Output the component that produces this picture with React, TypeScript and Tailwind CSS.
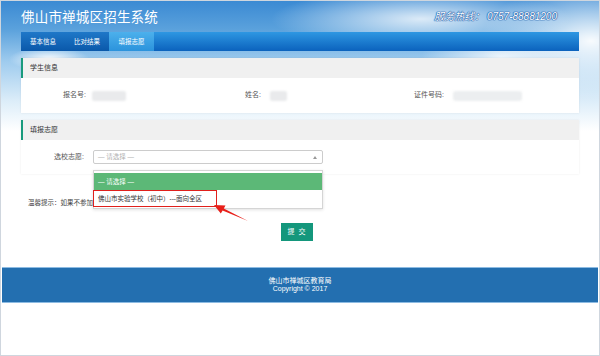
import { ChevronUp } from 'lucide-react'

const sky =
  'bg-[radial-gradient(ellipse_40px_12px_at_48px_58px,rgba(255,255,255,0.95),transparent),radial-gradient(ellipse_150px_30px_at_420px_18px,rgba(255,255,255,0.8),transparent),radial-gradient(ellipse_110px_60px_at_590px_40px,rgba(255,255,255,0.95),transparent),radial-gradient(ellipse_80px_25px_at_500px_56px,rgba(255,255,255,0.8),transparent),linear-gradient(to_bottom,#3b8ad3_0px,#5aa1dc_28px,#9ecbee_60px,#dcedf9_100px,#ffffff_130px)]'

function Card({ title, children }: { title: string; children: React.ReactNode }) {
  return (
    <div className="mx-[20px] bg-white shadow-[0_0_2px_rgba(0,0,0,0.08)]">
      <div className="h-[20px] flex items-center bg-[#f0f0f0] border-l-2 border-[#199a7c] pl-[7px] text-[7px] text-[#333]">
        {title}
      </div>
      {children}
    </div>
  )
}

export default function App() {
  return (
    <div
      className={`w-[600px] h-[356px] relative overflow-hidden border border-[#cfd6de] ${sky}`}
      style={{ fontFamily: '"Liberation Sans", "Noto Sans CJK SC", sans-serif' }}
    >
      {/* Header */}
      <div className="h-[31px] flex items-center justify-between px-[20px]">
        <span className="text-[13.5px] text-white tracking-[0.2px] [font-family:'Noto_Sans_CJK_SC',sans-serif]">
          佛山市禅城区招生系统
        </span>
        <span className="mr-[22px] text-[10px] italic text-white [text-shadow:0_0_1px_#1d5aa8,0_0_1px_#1d5aa8,0_0_1px_#1d5aa8,0_0_1px_#1d5aa8]">
          服务热线： 0757-88881200
        </span>
      </div>

      {/* Nav */}
      <div className="mx-[20px] h-[19px] flex bg-[linear-gradient(to_bottom,#2e97e2,#0b62bd)] text-[6.5px] text-white">
        <div className="w-[44px] flex items-center justify-center bg-[linear-gradient(to_bottom,#1f78c8,#0a58aa)]">基本信息</div>
        <div className="w-[44px] flex items-center justify-center bg-[linear-gradient(to_bottom,#1f78c8,#0a58aa)]">比对结果</div>
        <div className="w-[45px] flex items-center justify-center bg-[linear-gradient(to_bottom,#4cb0ec,#2b93dc)]">填报志愿</div>
      </div>

      <div className="mt-[7px]">
        <Card title="学生信息">
          <div className="h-[35px] flex items-center text-[7px] text-[#555]">
            <div className="w-[175px] flex items-center">
              <span className="w-[65px] text-right">报名号:</span>
              <span className="ml-[6px] w-[34px] h-[10px] bg-[#e9eaec] rounded-[2px] blur-[1px]" />
            </div>
            <div className="w-[183px] flex items-center">
              <span className="w-[65px] text-right">姓名:</span>
              <span className="ml-[9px] w-[17px] h-[10px] bg-[#e9eaec] rounded-[2px] blur-[1px]" />
            </div>
            <div className="flex items-center">
              <span className="w-[65px] text-right">证件号码:</span>
              <span className="ml-[9px] w-[69px] h-[10px] bg-[#eceef0] rounded-[3px] blur-[1px]" />
            </div>
          </div>
        </Card>
      </div>

      <div className="mt-[7px]">
        <Card title="填报志愿">
          <div className="h-[34px] flex items-center text-[7px] text-[#555]">
            <span className="w-[63px] text-right">选校志愿:</span>
            <div className="relative ml-[9px]">
              <div className="w-[230px] h-[14px] border border-[#cccccc] rounded-[2px] bg-white flex items-center justify-between pl-[4px] pr-[5px]">
                <span className="text-[6.5px] text-[#b0b0b0]">— 请选择 —</span>
                <span className="w-0 h-0 border-l-[2.5px] border-r-[2.5px] border-b-[3px] border-l-transparent border-r-transparent border-b-[#999]" />
              </div>

              {/* Open dropdown */}
              <div className="absolute z-10 left-0 top-[20px] w-[230px] bg-white border border-[#d5d5d5] shadow-[0_1px_3px_rgba(0,0,0,0.12)] pt-[2px] pb-[1px]">
                <div className="h-[17px] flex items-center bg-[#5cb877] pl-[4px] text-[6.5px] text-white">— 请选择 —</div>
                <div className="h-[17px] flex items-center">
                  <div className="h-[17px] w-[124px] -ml-px border-[1.5px] border-[#e0201c] flex items-center pl-[4px] text-[6.5px] text-[#333] whitespace-nowrap">
                    佛山市实验学校（初中）---面向全区
                  </div>
                </div>
              </div>

              {/* Red annotation arrow */}
              <svg
                className="absolute z-20 left-[113px] top-[48px]"
                width="50"
                height="30"
                viewBox="0 0 50 30"
              >
                <polygon
                  points="8,7 19.5,7.4 17.8,10.4 42,23 16.6,12.4 14.8,15.6"
                  fill="#e8201a"
                />
              </svg>
            </div>
          </div>
        </Card>
      </div>

      {/* Hint (rest of the sentence is hidden under the open dropdown) */}
      <div className="mt-[24px] mx-[20px] pl-[7px] h-[10px] flex items-center text-[6.5px] text-[#444]">
        温馨提示：如果不参加
      </div>

      {/* Submit */}
      <div className="mt-[15px] flex justify-center">
        <button className="w-[32px] h-[18px] bg-[#14977c] text-white text-[7px] tracking-[1px] ml-[-6px]">提 交</button>
      </div>

      {/* Footer */}
      <div className="mt-[26px] mx-[1px] h-[36px] bg-[#236fb0] border-y border-[#8dbbe2] flex flex-col items-center justify-center text-white text-[7px] leading-[8px]">
        <span>佛山市禅城区教育局</span>
        <span>Copyright © 2017</span>
      </div>
    </div>
  )
}
